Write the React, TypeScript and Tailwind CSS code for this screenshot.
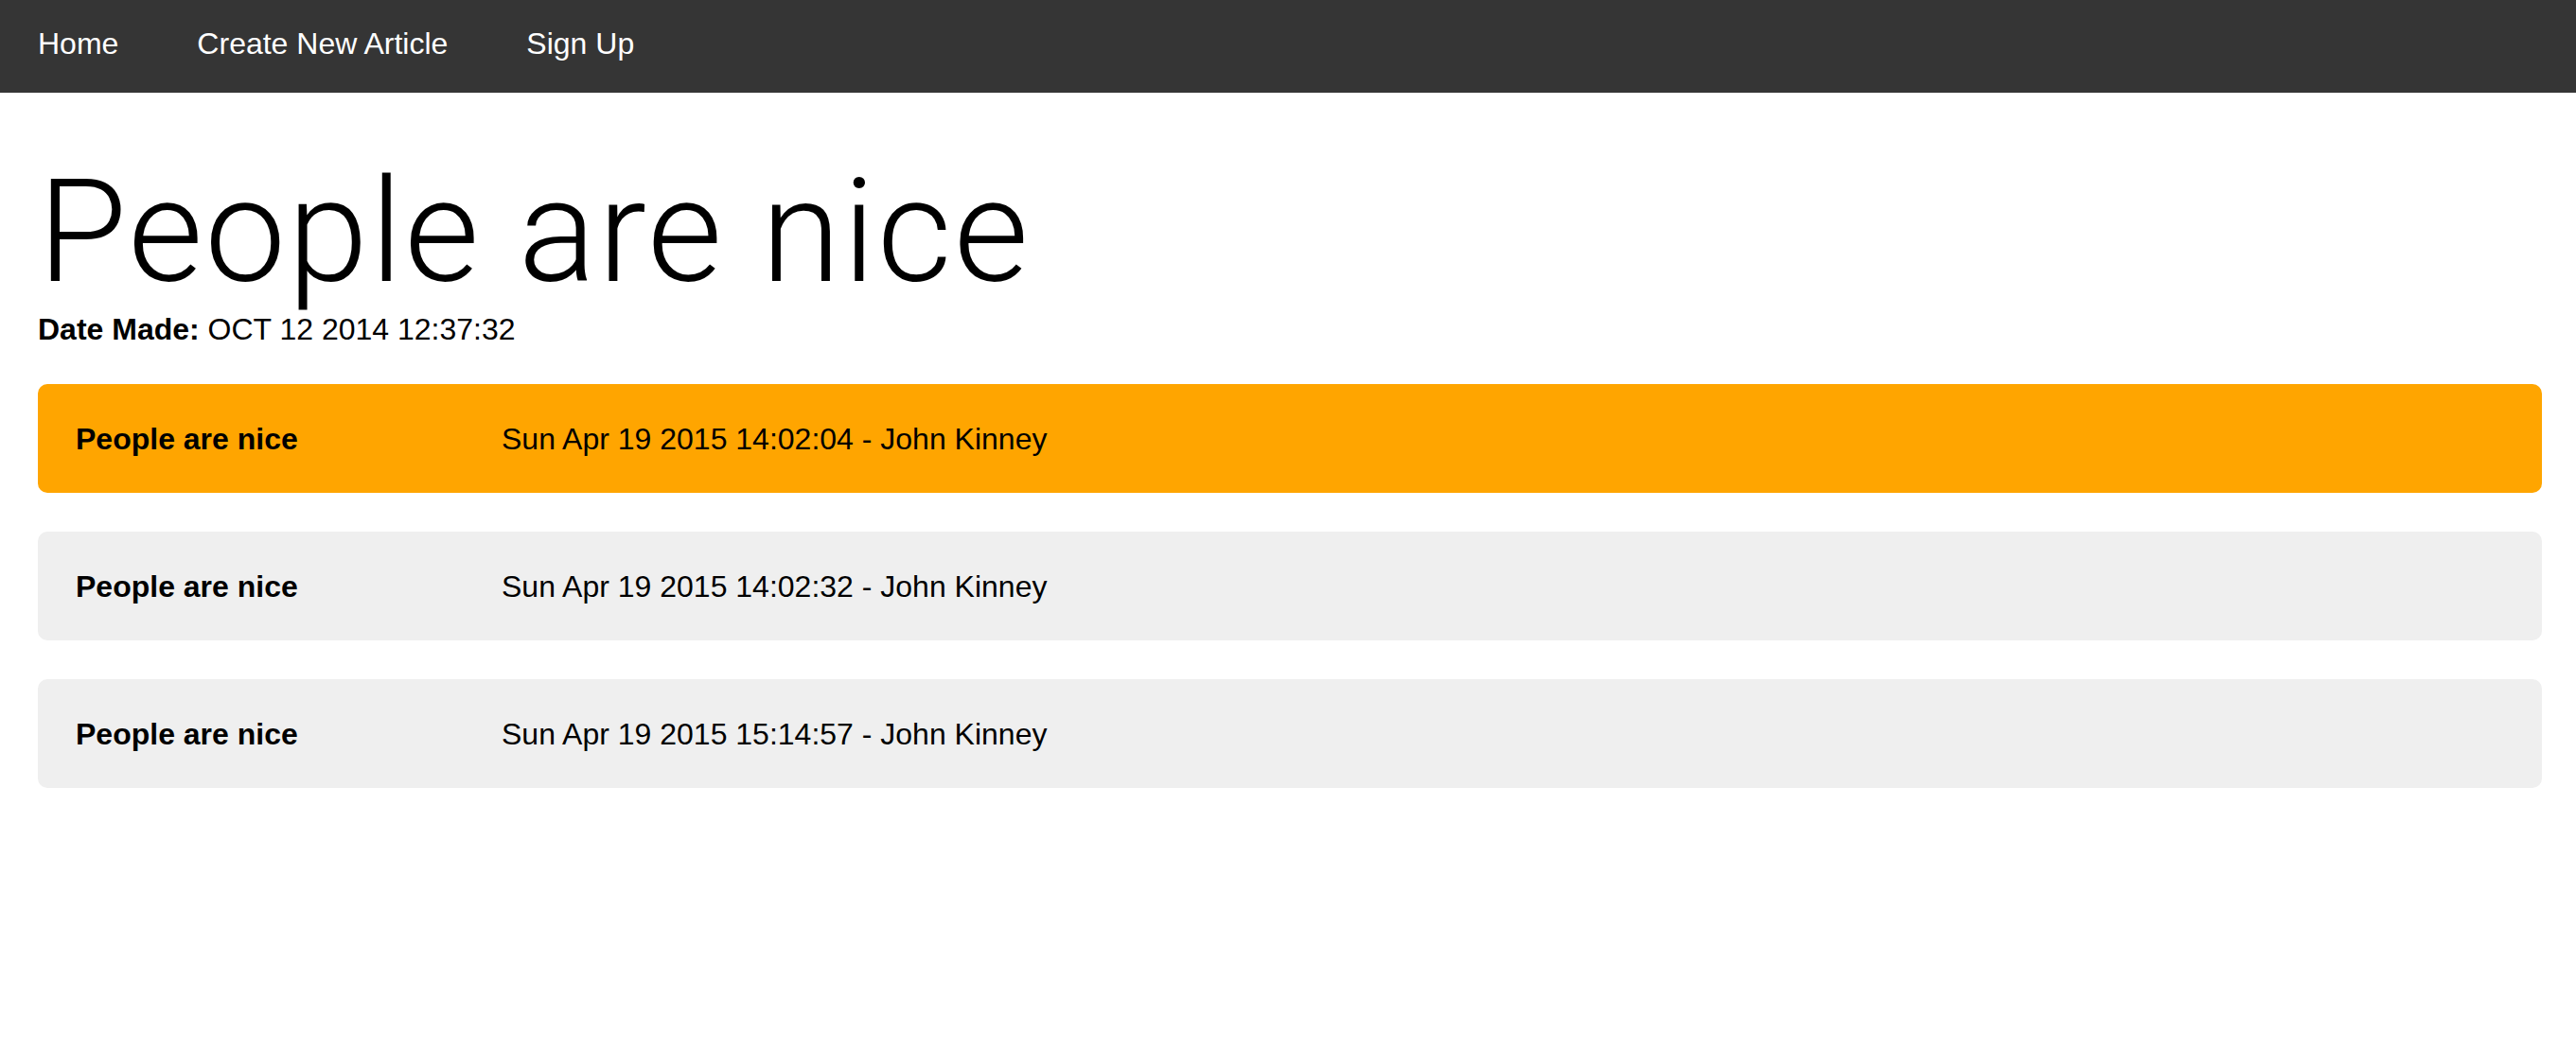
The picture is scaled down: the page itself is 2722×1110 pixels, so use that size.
const rows = [
  { title: "People are nice", meta: "Sun Apr 19 2015 14:02:04 - John Kinney", active: true },
  { title: "People are nice", meta: "Sun Apr 19 2015 14:02:32 - John Kinney", active: false },
  { title: "People are nice", meta: "Sun Apr 19 2015 15:14:57 - John Kinney", active: false },
];

export default function App() {
  return (
    <div className="min-h-[1110px] bg-white text-black font-['Liberation_Sans','Helvetica_Neue',Arial,sans-serif]">
      <nav className="h-[98px] bg-[#353535] pl-[40px] pt-[28px] flex gap-[83px] text-[32px] leading-[36px] text-white">
        <a className="cursor-pointer">Home</a>
        <a className="cursor-pointer">Create New Article</a>
        <a className="cursor-pointer">Sign Up</a>
      </nav>
      <main className="pl-[40px] pr-[36px]">
        <h1 className="mt-[70px] h-[153px] text-[153px] leading-[153px] font-['Roboto','Helvetica_Neue',sans-serif] font-light tracking-[2px] whitespace-nowrap">
          People are nice
        </h1>
        <p className="mt-[9px] text-[32px] leading-[36px]">
          <span className="font-bold">Date Made:</span> OCT 12 2014 12:37:32
        </p>
        <div className="mt-[40px] flex flex-col gap-[41px]">
          {rows.map((r, i) => (
            <div
              key={i}
              className={`h-[115px] rounded-[10px] pl-[40px] flex items-center text-[32px] leading-[36px] ${
                r.active ? "bg-[#ffa500]" : "bg-[#efefef]"
              }`}
            >
              <div className="w-[450px] font-bold">{r.title}</div>
              <div>{r.meta}</div>
            </div>
          ))}
        </div>
      </main>
    </div>
  );
}
